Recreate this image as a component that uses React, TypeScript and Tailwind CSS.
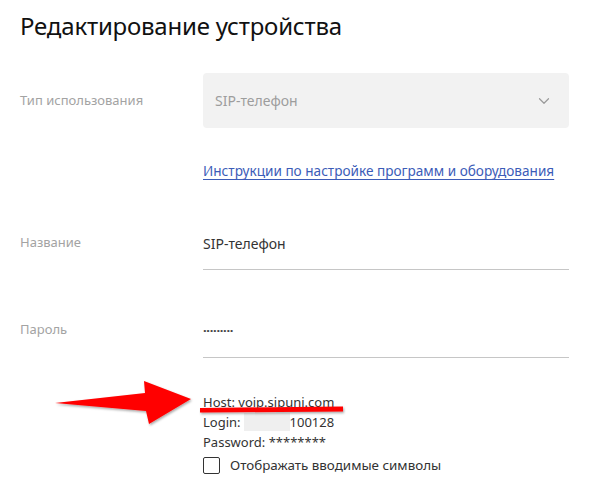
import { ChevronDown } from "lucide-react";

const font = { fontFamily: '"Noto Sans", sans-serif' };

function Label({ children }: { children: React.ReactNode }) {
  return <div className="w-[183px] shrink-0 text-[13px] text-[#a3a3a3]">{children}</div>;
}

export default function App() {
  return (
    <div className="relative w-[589px] h-[501px] bg-white overflow-hidden pl-[20px] pt-[10px]" style={font}>
      <h1 className="text-[24px] leading-[32px] text-[#111] tracking-[-0.2px]">Редактирование устройства</h1>

      <div className="mt-[31px] flex items-center">
        <Label>Тип использования</Label>
        <div className="w-[366px] h-[55px] rounded-[4px] bg-[#f2f2f2] flex items-center justify-between pl-[12px] pr-[16px]">
          <span className="text-[14px] text-[#9d9d9d]">SIP-телефон</span>
          <ChevronDown className="size-[18px] text-[#9a9a9a]" strokeWidth={1.6} />
        </div>
      </div>

      <div className="mt-[32px] pl-[183px] leading-[20px]">
        <a href="#" className="text-[13.6px] text-[#3c5cb8] underline underline-offset-[3px]">
          Инструкции по настройке программ и оборудования
        </a>
      </div>

      <div className="mt-[49px] flex">
        <div className="pt-[2px] leading-[20px]">
          <Label>Название</Label>
        </div>
        <div className="w-[366px] border-b border-[#c6c6c6] pt-[4px] pb-[15px] text-[14px] leading-[20px] text-[#333]">
          SIP-телефон
        </div>
      </div>

      <div className="mt-[48px] flex">
        <div className="pt-[1px] leading-[20px]">
          <Label>Пароль</Label>
        </div>
        <div className="w-[366px] border-b border-[#c6c6c6] pt-[2px] pb-[17px] text-[13px] leading-[20px] font-bold text-[#444] tracking-[-0.3px]">
          ·········
        </div>
      </div>

      <div className="mt-[34px] pl-[183px] text-[13px] leading-[20px] text-[#333]">
        <div>Host: voip.sipuni.com</div>
        <div className="flex items-center">
          <span>Login:</span>
          <span className="ml-[3px] inline-block w-[46px] h-[18px] bg-[#efefef]" />
          <span>100128</span>
        </div>
        <div>Password: ********</div>
        <label className="mt-[3px] flex items-center gap-[10px] text-[13.4px]">
          <span className="inline-block size-[17px] border-[1.5px] border-[#333] rounded-[2px]" />
          <span>Отображать вводимые символы</span>
        </label>
      </div>

      <svg className="absolute left-0 top-0 pointer-events-none" width="589" height="501" viewBox="0 0 589 501">
        <defs>
          <filter id="sh" x="-10%" y="-30%" width="120%" height="160%">
            <feDropShadow dx="1" dy="1.5" stdDeviation="1.2" floodColor="#000" floodOpacity="0.35" />
          </filter>
        </defs>
        <g filter="url(#sh)" fill="#ff0000">
          <path d="M55 403 L145 393 L144 381 L191 399 L149 424 L146 411 Z" />
          <path d="M200 408 L343 406.5 L343 411.5 L200 412.5 Z" />
        </g>
      </svg>
    </div>
  );
}
